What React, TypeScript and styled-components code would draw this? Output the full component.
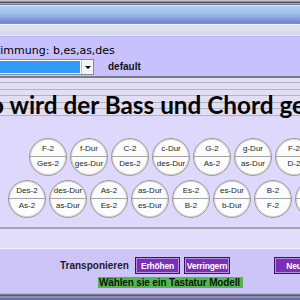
import React from "react";
import styled, { createGlobalStyle } from "styled-components";

const Global = createGlobalStyle`
  html, body { margin: 0; padding: 0; background: #c8c0fc; overflow: hidden; }
  * { box-sizing: border-box; }
`;

const Screen = styled.div`
  width: 300px;
  height: 300px;
  overflow: hidden;
  display: flex;
  flex-direction: column;
  font-family: "Liberation Sans", Arial, sans-serif;
`;

const Chrome = styled.div`
  height: 6px;
  flex: none;
  background: linear-gradient(
    to bottom,
    #c4c4cc 0 1px,
    #8c8c96 1px 2px,
    #50505c 2px 3px,
    #a4a4ae 3px 4px,
    #7c7c88 4px 5px,
    #d8e4f4 5px 6px
  );
`;

const TitleBar = styled.div`
  height: 17px;
  flex: none;
  background: linear-gradient(to bottom, #b0d0f2 0%, #9dc1ea 45%, #8aa2df 70%, #7480d2 100%);
`;

const MenuStrip = styled.div`
  height: 14px;
  flex: none;
  background: linear-gradient(
    to bottom,
    #8e8ea0 0 1px,
    #f4f4fa 1px 2px,
    #dfe2f0 2px 8px,
    #d6d9ea 8px 12px,
    #e8e8f6 12px 13px,
    #bdb4f2 13px 14px
  );
`;

const SettingsPanel = styled.div`
  height: 39px;
  flex: none;
  background: #c9c1fd;
  padding: 8px 0 0 0;
  display: flex;
  flex-direction: column;
  gap: 2px;
`;

const TuningLabel = styled.div`
  font-family: "DejaVu Sans", Verdana, sans-serif;
  font-size: 11px;
  color: #000;
  line-height: 12px;
  margin-left: -11px;
  white-space: nowrap;
`;

const SelectRow = styled.div`
  display: flex;
  align-items: center;
  gap: 14px;
`;

const Select = styled.div`
  width: 94px;
  height: 16px;
  display: flex;
  border: 1px solid #7f8a9c;
  border-left: none;
  background: #fff;
`;

const SelectValue = styled.div`
  flex: 1;
  background: #3399f7;
  margin: 1px 1px 1px 0;
`;

const SelectButton = styled.div`
  width: 12px;
  background: #f4f4f4;
  border-left: 1px solid #c0c0c0;
  display: flex;
  align-items: center;
  justify-content: center;
  &::after {
    content: "";
    border-left: 3px solid transparent;
    border-right: 3px solid transparent;
    border-top: 3px solid #000;
  }
`;

const DefaultLabel = styled.div`
  font-size: 10px;
  font-weight: bold;
  color: #111;
  line-height: 12px;
`;

const Staff = styled.div`
  height: 42px;
  flex: none;
  background:
    linear-gradient(to bottom,
      #7c7c84 0 2px,
      #e2def6 2px 6px,
      #b4b4bc 6px 7px,
      #e2def6 7px 13px,
      #b4b4bc 13px 14px,
      #e2def6 14px 19px,
      #b4b4bc 19px 20px,
      #e2def6 20px 26px,
      #b4b4bc 26px 27px,
      #e2def6 27px 32px,
      #b4b4bc 32px 33px,
      #e2def6 33px 39px,
      #b4b4bc 39px 40px,
      #ddd8fb 40px 42px);
  display: flex;
  align-items: flex-end;
  overflow: hidden;
`;

const BigTitle = styled.div`
  font-family: "Lato", "Liberation Sans", sans-serif;
  font-weight: 700;
  font-size: 24.3px;
  line-height: 24px;
  color: #050505;
  white-space: nowrap;
  margin-left: -34px;
  margin-bottom: 1px;
`;

const KeyArea = styled.div`
  height: 109px;
  flex: none;
  background: #ddd8fc;
  padding-top: 20px;
  display: flex;
  flex-direction: column;
  gap: 4px;
  overflow: hidden;
`;

const KeyRow = styled.div<{ $offset: number }>`
  display: flex;
  gap: 3px;
  padding-left: ${(p) => p.$offset}px;
`;

const Key = styled.div`
  width: 38px;
  height: 38px;
  flex: none;
  border-radius: 50%;
  border: 1px solid #9c9c9c;
  box-shadow: inset 0 0 0 1px #d4d4d4;
  background: #fcfcfc;
  overflow: hidden;
  display: grid;
  grid-template-rows: 1fr 1fr;
  font-size: 8px;
  color: #1e1e1e;
  text-align: center;
`;

const KeyTop = styled.div`
  border-bottom: 1px solid #a4a4a4;
  display: flex;
  align-items: flex-end;
  justify-content: center;
  padding-bottom: 2px;
  line-height: 10px;
  white-space: nowrap;
`;

const KeyBottom = styled.div`
  display: flex;
  align-items: flex-start;
  justify-content: center;
  padding-top: 2px;
  line-height: 10px;
  white-space: nowrap;
`;

const Divider = styled.div`
  height: 22px;
  flex: none;
  background: linear-gradient(to bottom, #a6a6b2 0 2px, #e1ddfb 2px 21px, #f2f0fe 21px 22px);
`;

const ControlPanel = styled.div`
  height: 44px;
  flex: none;
  background: #cdc5f7;
  padding-top: 8px;
  display: flex;
  flex-direction: column;
  gap: 3px;
`;

const ControlRow = styled.div`
  display: flex;
  align-items: center;
  padding-left: 60px;
  height: 17px;
`;

const TransLabel = styled.div`
  font-size: 10px;
  font-weight: bold;
  color: #1a1a2a;
  width: 75px;
  flex: none;
  white-space: nowrap;
`;

const PurpleButton = styled.div<{ $w: number; $ml?: number }>`
  width: ${(p) => p.$w}px;
  margin-left: ${(p) => p.$ml ?? 0}px;
  height: 17px;
  flex: none;
  background: #7b2fb6;
  border: 1px solid #3c1466;
  box-shadow: inset 0 0 0 1px #b890e0;
  color: #fff;
  font-size: 8.5px;
  letter-spacing: -0.2px;
  font-weight: bold;
  display: flex;
  align-items: center;
  justify-content: center;
  white-space: nowrap;
`;

const Hint = styled.div`
  margin-left: 98px;
  width: 145px;
  height: 11px;
  background: #52b84e;
  color: #0a1a0a;
  font-size: 10px;
  letter-spacing: -0.15px;
  font-weight: bold;
  line-height: 11px;
  white-space: nowrap;
  overflow: hidden;
  padding-left: 1px;
`;

const BottomChrome = styled.div`
  flex: 1;
  background: linear-gradient(
    to bottom,
    #b8b4d8 0 1px,
    #7c7c90 1px 2px,
    #5a5a70 2px 3px,
    #8c90b4 3px 5px,
    #6870a8 5px 7px
  );
`;

const row1: [string, string][] = [
  ["F-2", "Ges-2"],
  ["f-Dur", "ges-Dur"],
  ["C-2", "Des-2"],
  ["c-Dur", "des-Dur"],
  ["G-2", "As-2"],
  ["g-Dur", "as-Dur"],
  ["F-2", "D-2"],
];

const row2: [string, string][] = [
  ["Des-2", "As-2"],
  ["des-Dur", "as-Dur"],
  ["As-2", "Es-2"],
  ["as-Dur", "es-Dur"],
  ["Es-2", "B-2"],
  ["es-Dur", "b-Dur"],
  ["B-2", "F-2"],
  ["b-Dur", "f-Dur"],
];

function KeyButton({ top, bottom }: { top: string; bottom: string }) {
  return (
    <Key>
      <KeyTop>{top}</KeyTop>
      <KeyBottom>{bottom}</KeyBottom>
    </Key>
  );
}

export default function App() {
  return (
    <Screen>
      <Global />
      <Chrome />
      <TitleBar />
      <MenuStrip />
      <SettingsPanel>
        <TuningLabel>Stimmung: b,es,as,des</TuningLabel>
        <SelectRow>
          <Select>
            <SelectValue />
            <SelectButton />
          </Select>
          <DefaultLabel>default</DefaultLabel>
        </SelectRow>
      </SettingsPanel>
      <Staff>
        <BigTitle>Wo wird der Bass und Chord gespielt?</BigTitle>
      </Staff>
      <KeyArea>
        <KeyRow $offset={29}>
          {row1.map(([t, b], i) => (
            <KeyButton key={i} top={t} bottom={b} />
          ))}
        </KeyRow>
        <KeyRow $offset={8}>
          {row2.map(([t, b], i) => (
            <KeyButton key={i} top={t} bottom={b} />
          ))}
        </KeyRow>
      </KeyArea>
      <Divider />
      <ControlPanel>
        <ControlRow>
          <TransLabel>Transponieren</TransLabel>
          <PurpleButton $w={45}>Erhöhen</PurpleButton>
          <PurpleButton $w={46} $ml={4}>Verringern</PurpleButton>
          <PurpleButton $w={40} $ml={44}>Neu</PurpleButton>
        </ControlRow>
        <Hint>Wählen sie ein Tastatur Modell</Hint>
      </ControlPanel>
      <BottomChrome />
    </Screen>
  );
}
